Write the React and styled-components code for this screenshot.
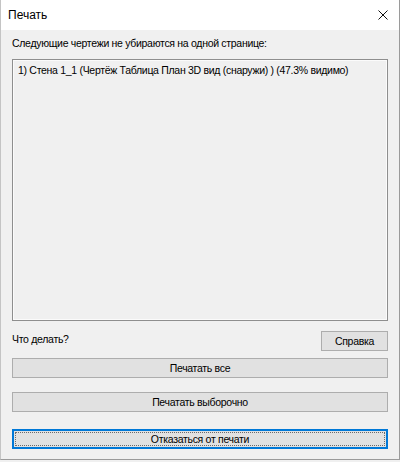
import React from "react";
import styled, { createGlobalStyle } from "styled-components";

const Global = createGlobalStyle`
  html, body {
    margin: 0;
    padding: 0;
    background: #f0f0f0;
  }
  body {
    font-family: "Liberation Sans", "Segoe UI", sans-serif;
    font-size: 10.5px;
    letter-spacing: -0.3px;
    color: #000;
  }
`;

const Window = styled.div`
  box-sizing: border-box;
  width: 400px;
  height: 460px;
  background: #f0f0f0;
  border-left: 1px solid #c4c4c4;
  border-right: 1px solid #9a9a9a;
  border-bottom: 1px solid #9a9a9a;
  display: flex;
  flex-direction: column;
`;

const TitleBar = styled.div`
  height: 30px;
  flex: none;
  background: #fff;
  display: flex;
  align-items: center;
  justify-content: space-between;
  padding-left: 7px;
`;

const Title = styled.span`
  font-size: 12px;
  letter-spacing: 0;
  line-height: 16px;
`;

const CloseButton = styled.div`
  width: 32px;
  height: 30px;
  display: flex;
  align-items: center;
  justify-content: center;
  padding-bottom: 1px;
  box-sizing: border-box;
`;

const Body = styled.div`
  flex: 1;
  display: flex;
  flex-direction: column;
  padding: 0 11px;
`;

const Caption = styled.div`
  line-height: 16px;
  margin-top: 5px;
  white-space: nowrap;
`;

const ListBox = styled.div`
  box-sizing: border-box;
  margin-top: 8px;
  height: 262px;
  border: 1px solid #8e8e8e;
  box-shadow: inset 0 0 0 1px #fbfbfb;
  padding: 3px 5px;
`;

const ListItem = styled.div`
  line-height: 14px;
  white-space: nowrap;
`;

const HelpRow = styled.div`
  display: flex;
  justify-content: space-between;
  align-items: flex-start;
  margin-top: 10px;
`;

const Question = styled.span`
  line-height: 16px;
  margin-top: 0;
`;

const Button = styled.button`
  box-sizing: border-box;
  height: 20px;
  width: ${(p) => (p.$narrow ? "67px" : "100%")};
  margin-top: ${(p) => p.$gap || 0}px;
  padding: 0;
  font: inherit;
  letter-spacing: inherit;
  color: #000;
  background: #e1e1e1;
  border: ${(p) => (p.$default ? "2px solid #0078d7" : "1px solid #adadad")};
  border-radius: 0;
  position: relative;
  display: flex;
  align-items: center;
  justify-content: center;
  line-height: 16px;
`;

const FocusRing = styled.span`
  position: absolute;
  inset: 1px;
  border: 1px dotted #6a6a6a;
  pointer-events: none;
`;

export default function App() {
  return (
    <>
      <Global />
      <Window>
        <TitleBar>
          <Title>Печать</Title>
          <CloseButton>
            <svg width="10" height="10" viewBox="0 0 10 10">
              <path d="M0.5 0.5L9.5 9.5M9.5 0.5L0.5 9.5" stroke="#111" strokeWidth="1" fill="none" />
            </svg>
          </CloseButton>
        </TitleBar>
        <Body>
          <Caption>Следующие чертежи не убираются на одной странице:</Caption>
          <ListBox>
            <ListItem>1) Стена 1_1 (Чертёж Таблица План 3D вид (снаружи) ) (47.3% видимо)</ListItem>
          </ListBox>
          <HelpRow>
            <Question>Что делать?</Question>
            <Button $narrow>Справка</Button>
          </HelpRow>
          <Button $gap={7}>Печатать все</Button>
          <Button $gap={14}>Печатать выборочно</Button>
          <Button $gap={17} $default>
            <FocusRing />
            Отказаться от печати
          </Button>
        </Body>
      </Window>
    </>
  );
}
